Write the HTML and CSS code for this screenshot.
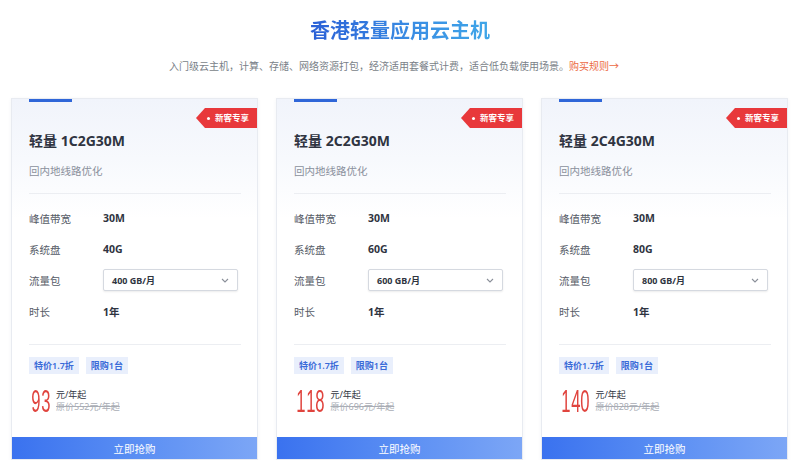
FILE: index.html
```html
<!DOCTYPE html>
<html lang="zh-CN">
<head>
<meta charset="utf-8">
<title>香港轻量应用云主机</title>
<link rel="stylesheet" href="styles.css">
</head>
<body>
<div class="page">
  <header class="hero">
    <h1 class="hero-title">香港轻量应用云主机</h1>
    <p class="hero-sub">入门级云主机，计算、存储、网络资源打包，经济适用套餐式计费，适合低负载使用场景。<a class="rule-link" href="#">购买规则→</a></p>
  </header>

  <section class="plans">
    <article class="plan">
      <span class="plan-bar"></span>
      <span class="badge"><i class="badge-dot"></i>新客专享</span>
      <div class="plan-body">
        <h2 class="plan-name">轻量 1C2G30M</h2>
        <p class="plan-desc">回内地线路优化</p>
        <dl class="specs">
          <div class="spec"><dt>峰值带宽</dt><dd>30M</dd></div>
          <div class="spec"><dt>系统盘</dt><dd>40G</dd></div>
          <div class="spec"><dt>流量包</dt><dd><div class="select"><span>400 GB/月</span><svg class="chev" width="8" height="5" viewBox="0 0 8 5"><path d="M1 1l3 3 3-3" fill="none" stroke="#8a8f99" stroke-width="1.1"/></svg></div></dd></div>
          <div class="spec"><dt>时长</dt><dd>1年</dd></div>
        </dl>
        <div class="tags"><span class="tag">特价1.7折</span><span class="tag">限购1台</span></div>
        <div class="price">
          <span class="num"><span>9</span><span>3</span></span>
          <span class="price-text"><span class="unit">元/年起</span><span class="orig">原价552元/年起</span></span>
        </div>
      </div>
      <button class="buy">立即抢购</button>
    </article>

    <article class="plan">
      <span class="plan-bar"></span>
      <span class="badge"><i class="badge-dot"></i>新客专享</span>
      <div class="plan-body">
        <h2 class="plan-name">轻量 2C2G30M</h2>
        <p class="plan-desc">回内地线路优化</p>
        <dl class="specs">
          <div class="spec"><dt>峰值带宽</dt><dd>30M</dd></div>
          <div class="spec"><dt>系统盘</dt><dd>60G</dd></div>
          <div class="spec"><dt>流量包</dt><dd><div class="select"><span>600 GB/月</span><svg class="chev" width="8" height="5" viewBox="0 0 8 5"><path d="M1 1l3 3 3-3" fill="none" stroke="#8a8f99" stroke-width="1.1"/></svg></div></dd></div>
          <div class="spec"><dt>时长</dt><dd>1年</dd></div>
        </dl>
        <div class="tags"><span class="tag">特价1.7折</span><span class="tag">限购1台</span></div>
        <div class="price">
          <span class="num"><span>1</span><span>1</span><span>8</span></span>
          <span class="price-text"><span class="unit">元/年起</span><span class="orig">原价696元/年起</span></span>
        </div>
      </div>
      <button class="buy">立即抢购</button>
    </article>

    <article class="plan">
      <span class="plan-bar"></span>
      <span class="badge"><i class="badge-dot"></i>新客专享</span>
      <div class="plan-body">
        <h2 class="plan-name">轻量 2C4G30M</h2>
        <p class="plan-desc">回内地线路优化</p>
        <dl class="specs">
          <div class="spec"><dt>峰值带宽</dt><dd>30M</dd></div>
          <div class="spec"><dt>系统盘</dt><dd>80G</dd></div>
          <div class="spec"><dt>流量包</dt><dd><div class="select"><span>800 GB/月</span><svg class="chev" width="8" height="5" viewBox="0 0 8 5"><path d="M1 1l3 3 3-3" fill="none" stroke="#8a8f99" stroke-width="1.1"/></svg></div></dd></div>
          <div class="spec"><dt>时长</dt><dd>1年</dd></div>
        </dl>
        <div class="tags"><span class="tag">特价1.7折</span><span class="tag">限购1台</span></div>
        <div class="price">
          <span class="num"><span>1</span><span>4</span><span>0</span></span>
          <span class="price-text"><span class="unit">元/年起</span><span class="orig">原价828元/年起</span></span>
        </div>
      </div>
      <button class="buy">立即抢购</button>
    </article>
  </section>
</div>
</body>
</html>
```

FILE: styles.css
```css
* { box-sizing: border-box; }

body {
  margin: 0;
  background: #fff;
  font-family: "Noto Sans", "Noto Sans CJK SC", sans-serif;
  color: #2f3441;
}

.hero {
  text-align: center;
  padding-top: 17px;
}

.hero-title {
  display: inline-block;
  margin: 0;
  font-size: 20px;
  line-height: 28px;
  font-weight: 700;
  background: linear-gradient(90deg, #2a5fd6 0%, #3a8fe4 60%, #3fa6e8 100%);
  -webkit-background-clip: text;
  background-clip: text;
  color: transparent;
}

.hero-sub {
  margin: 14px 0 0;
  padding-right: 12px;
  font-size: 10px;
  line-height: 14px;
  color: #7a7f88;
}

.rule-link {
  color: #ec6a45;
  text-decoration: none;
}

.plans {
  display: flex;
  gap: 18px;
  padding: 0 11px;
  margin-top: 25px;
}

.plan {
  position: relative;
  width: 247px;
  height: 362px;
  border: 1px solid #e8ebf1;
  background: linear-gradient(180deg, #f1f4fb 0, #f7f9fd 60px, #ffffff 120px);
  box-shadow: 0 1px 4px rgba(40, 60, 100, 0.05);
  display: flex;
  flex-direction: column;
}

.plan-bar {
  display: block;
  margin-left: 17px;
  width: 43px;
  height: 3px;
  background: #2f66d8;
}

.badge {
  position: absolute;
  top: 9px;
  right: 0;
  height: 20px;
  padding: 0 8px 0 19px;
  background: #e8383b;
  color: #fff;
  font-size: 8.5px;
  font-weight: 700;
  line-height: 20px;
  clip-path: polygon(0 50%, 9px 0, 100% 0, 100% 100%, 9px 100%);
}

.badge-dot {
  position: absolute;
  left: 11px;
  top: 8.5px;
  width: 3px;
  height: 3px;
  border-radius: 50%;
  background: #fff;
}

.plan-body {
  padding: 0 16px 0 17px;
}

.plan-name {
  margin: 29px 0 0;
  font-size: 14px;
  line-height: 20px;
  font-weight: 700;
  color: #2f3441;
}

.plan-desc {
  margin: 12px 0 0;
  padding-bottom: 14px;
  border-bottom: 1px solid #eceef2;
  font-size: 10.5px;
  line-height: 16px;
  color: #8a909c;
}

.specs {
  margin: 0;
  padding: 13px 0 22px;
  border-bottom: 1px solid #eceef2;
  display: flex;
  flex-direction: column;
  gap: 9px;
}

.spec {
  display: flex;
  align-items: center;
  height: 22px;
}

.spec dt {
  width: 74px;
  font-size: 10.5px;
  color: #555b66;
}

.spec dd {
  margin: 0;
  font-size: 10.5px;
  font-weight: 700;
  color: #2f3441;
}

.select {
  width: 135px;
  height: 22px;
  border: 1px solid #d5d9e0;
  border-radius: 2px;
  box-shadow: 0 1px 2px rgba(0, 0, 0, 0.08);
  background: #fff;
  display: flex;
  align-items: center;
  justify-content: space-between;
  padding: 0 8px;
  font-size: 9px;
  font-weight: 700;
  color: #2f3441;
}

.tags {
  display: flex;
  gap: 7px;
  margin-top: 12px;
}

.tag {
  height: 17px;
  line-height: 17px;
  padding: 0 5px;
  background: #e9effc;
  color: #3a6ad8;
  font-size: 9px;
  font-weight: 600;
}

.price {
  display: flex;
  align-items: center;
  margin-top: 12px;
}

.num {
  display: flex;
  color: #e0443e;
}

.num span {
  display: inline-block;
  width: 9.5px;
  font-family: "Liberation Sans", sans-serif;
  font-size: 32px;
  line-height: 30px;
  text-align: center;
  transform: scaleX(0.52);
}

.price-text {
  display: flex;
  flex-direction: column;
  margin-left: 8px;
  font-size: 9px;
  line-height: 12px;
}

.unit {
  color: #2f3441;
}

.orig {
  color: #a9adb5;
  text-decoration: line-through;
}

.buy {
  margin-top: auto;
  height: 22px;
  border: 0;
  padding: 0;
  background: linear-gradient(90deg, #3a72ef 0%, #5a8ef3 50%, #7ca6f6 100%);
  color: #fff;
  font-family: inherit;
  font-size: 10.5px;
  cursor: pointer;
}
```
